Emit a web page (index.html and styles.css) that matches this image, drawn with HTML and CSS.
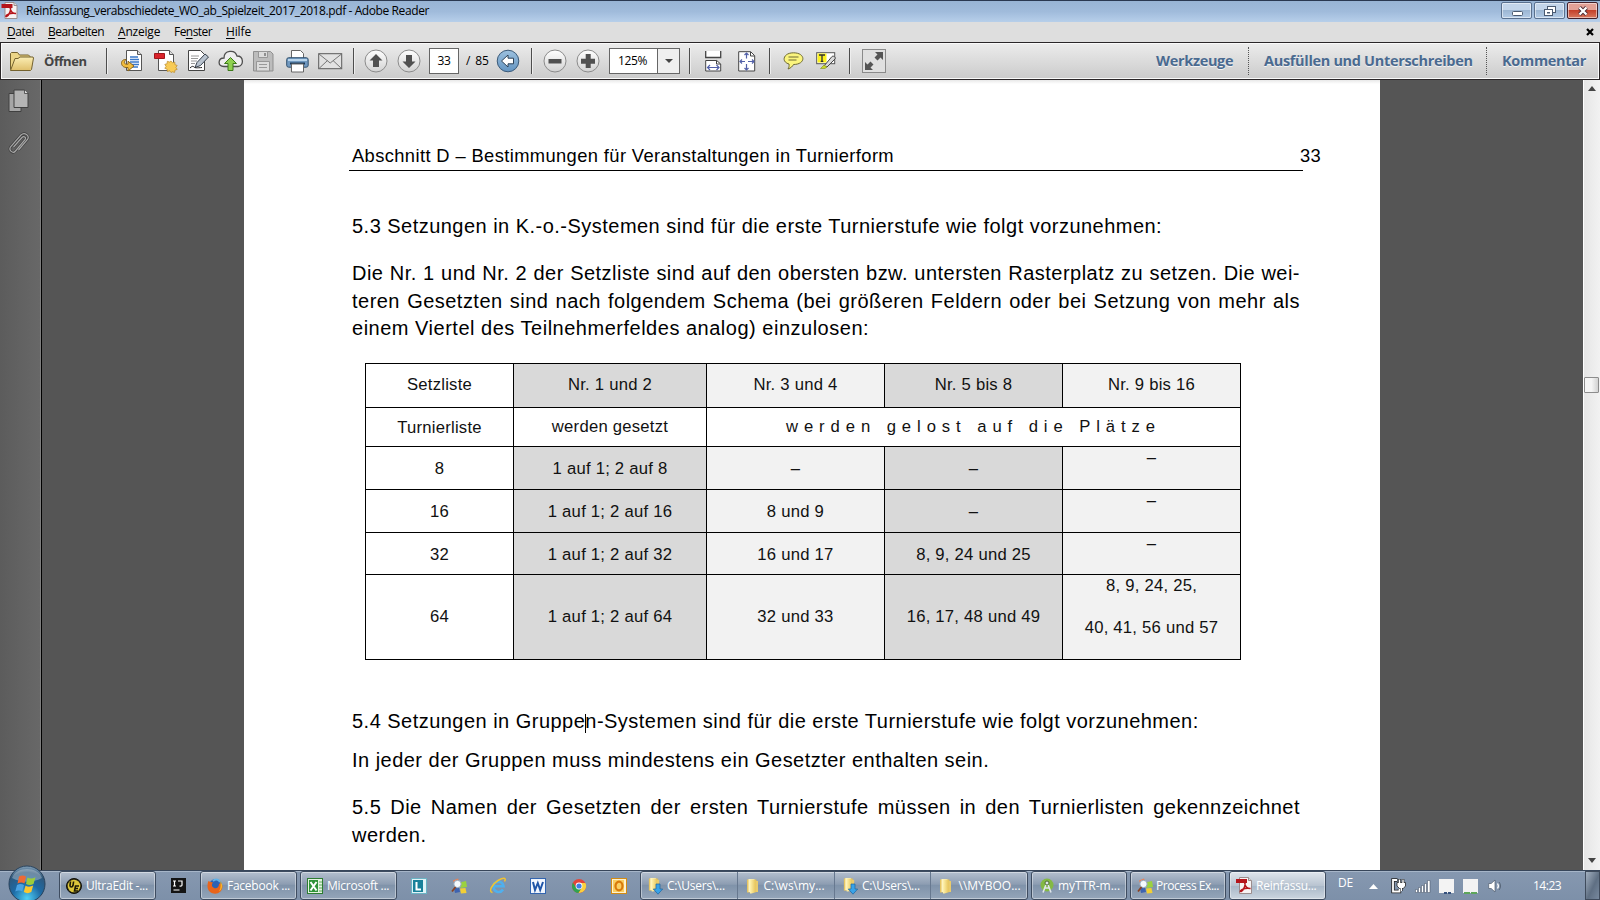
FILE: index.html
```html
<!DOCTYPE html>
<html lang="de">
<head>
<meta charset="utf-8">
<title>Reinfassung_verabschiedete_WO_ab_Spielzeit_2017_2018.pdf - Adobe Reader</title>
<link rel="stylesheet" href="styles.css">
</head>
<body>
<svg class="defs" width="0" height="0">
  <defs>
    <linearGradient id="gBtn" x1="0" y1="0" x2="0" y2="1"><stop offset="0" stop-color="#fff"/><stop offset="1" stop-color="#d2d2d2"/></linearGradient>
    <linearGradient id="gFolder" x1="0" y1="0" x2="0" y2="1"><stop offset="0" stop-color="#fbeeb4"/><stop offset="1" stop-color="#dfbf6b"/></linearGradient>
    <linearGradient id="gBlue" x1="0" y1="0" x2="0" y2="1"><stop offset="0" stop-color="#9cc0de"/><stop offset="1" stop-color="#6495c2"/></linearGradient>
    <linearGradient id="gYel" x1="0" y1="0" x2="1" y2="0"><stop offset="0" stop-color="#fff3b0"/><stop offset="1" stop-color="#e3bd4c"/></linearGradient>
    <radialGradient id="gOrb" cx=".5" cy=".9" r=".9"><stop offset="0" stop-color="#4fd0f5"/><stop offset=".45" stop-color="#1d6aa5"/><stop offset=".8" stop-color="#2f587c"/><stop offset="1" stop-color="#88a4bb"/></radialGradient>
    <symbol id="pdf" viewBox="0 0 16 17"><path d="M3.500 .5h9l3 3v13h-12z" fill="#f7f3f3" stroke="#9b8d8d"/><path d="M12.500 .5v3h3" fill="#ddd" stroke="#9b8d8d"/><path d="M0 2h11v4H0z" fill="#b5151b"/><path d="M4.500 15c3-2 5-5.500 4.500-9.500M4.500 15c-.8-2 4-4.500 10-3.500-3 .3-5.500-2-5.800-5.500" fill="none" stroke="#b5151b" stroke-width="1.500"/></symbol>
    <symbol id="fold" viewBox="0 0 16 16"><path d="M2 1.500h5.500v13H2z" fill="#e6c564"/><path d="M3.500 1h6v13h-6z" fill="#fdf3c0"/><path d="M5 1.500h6.500V14l-5 1.500H5z" fill="url(#gYel)"/><path d="M10.500 3H13v11h-2.500z" fill="#e9cb6c"/></symbol>
    <symbol id="folddl" viewBox="0 0 16 18"><use href="#fold" width="15" height="15"/><path d="M9 7h4v5h2.700L11 17.200 6.300 12H9z" fill="#39a3e8" stroke="#1d649f" stroke-width=".7"/></symbol>
    <symbol id="proc" viewBox="0 0 16 16"><path d="M2 2.500l5-2 2 5-5 2z" fill="#f08050"/><path d="M8.500 4.500l6.500-1.500 1 6-6.500 1z" fill="#9bd23f"/><path d="M3 10l5-1 1 5-5 1z" fill="#3d63b0"/><path d="M9 10.500l5.500-.5 1 5-5.500 .5z" fill="#f2cf35"/><circle cx="6.500" cy="6" r="3.700" fill="#f4f9fd" stroke="#93a4b8"/><path d="M4.500 9l-3.500 4.500" stroke="#8a4222" stroke-width="1.800"/></symbol>
  </defs>
</svg>

<header class="title">
  <svg class="title-icon" width="17" height="17"><use href="#pdf"/></svg>
  <span class="title-text">Reinfassung_verabschiedete_WO_ab_Spielzeit_2017_2018.pdf - Adobe Reader</span>
  <div class="winbtns">
    <span class="wb"><svg width="30" height="16"><rect x="10.500" y="8.500" width="10" height="4" rx="1" fill="#fff" stroke="#4b5a70"/></svg></span>
    <span class="wb"><svg width="30" height="16"><rect x="12.500" y="3.500" width="8" height="6" fill="#fff" stroke="#4b5a70"/><rect x="9.500" y="6.500" width="8" height="6" fill="#fff" stroke="#4b5a70"/><rect x="12" y="9" width="3" height="1.500" fill="#4b5a70"/></svg></span>
    <span class="wb close"><svg width="30" height="16"><path d="M11.500 4.500l7 7M18.500 4.500l-7 7" stroke="#4a2b33" stroke-width="4"/><path d="M11.500 4.500l7 7M18.500 4.500l-7 7" stroke="#fff" stroke-width="2.300"/></svg></span>
  </div>
</header>

<nav class="menu">
  <span class="m1"><u>D</u>atei</span><span class="m2"><u>B</u>earbeiten</span><span class="m3"><u>A</u>nzeige</span><span class="m4">Fe<u>n</u>ster</span><span class="m5"><u>H</u>ilfe</span>
  <svg class="menu-x" width="8" height="8"><path d="M1 1l6 6M7 1L1 7" stroke="#000" stroke-width="2.200"/></svg>
</nav>

<div class="toolbar">
  <svg class="i-folder" width="26" height="21" viewBox="0 0 26 21"><path d="M1.500 18.500v-16l1-1h6l2 2.500h9l1.500 1.500V18" fill="#ecd587" stroke="#74622f"/><path d="M1.500 19.500L6 7.500h3l2-1.500h13l.5 1-2 11.500-1 1z" fill="url(#gFolder)" stroke="#74622f"/></svg>
  <b class="open">Öffnen</b>
  <i class="sep s1"></i>
  <svg class="t1" width="24" height="22" viewBox="0 0 24 22"><path d="M6.500 .5h11l4 4v16h-15z" fill="#fff" stroke="#555"/><path d="M17.500 .5v4h4" fill="#ddd" stroke="#555"/><path d="M10 7h8M10 9.500h9M10 12h9M10 14.500h9M12 17h6" stroke="#3a78c9" stroke-width="1.300"/><path d="M6 9.500C0 9 0 17 6 17.500h2V21l6-5-6-4.800v3H6.500c-2.500-.2-3-2-.5-4.700z" fill="#f2bd3f" stroke="#8b651b"/></svg>
  <svg class="t2" width="24" height="23" viewBox="0 0 24 23"><path d="M4.500 .5h11l4 4v16h-15z" fill="#fff" stroke="#555"/><path d="M15.500 .5v4h4" fill="#ddd" stroke="#555"/><path d="M.5 3.500h10v5H.5z" fill="#d9232b" stroke="#a0161c"/><path d="M17 11l1.500 1.800 2.300-.7.1 2.500 2.300.9-1.300 1.900 1.300 2-2.300.8-.3 2.200-2.200-.6L17 22.500l-1.400-1.700-2.300.7-.2-2.400-2.300-.8 1.300-1.900-1.300-2 2.300-.7.2-2.400 2.300.7z" fill="#f8cb55" stroke="#b98a2c" stroke-width=".7"/></svg>
  <svg class="t3" width="23" height="22" viewBox="0 0 23 22"><path d="M1.500 .5h12l4 4v16h-16z" fill="#fff" stroke="#444"/><path d="M4 6h8M4 8.500h7M4 11h6M4 13.500h4" stroke="#999"/><path d="M8 17.500l2-5 8-8.500 3.500 3-8 8.500z" fill="#b9c3cf" stroke="#38424e"/><path d="M3 18c2-2 3-2 4-1s3 1 8 .5" fill="none" stroke="#222"/></svg>
  <svg class="t4" width="26" height="22" viewBox="0 0 26 22"><path d="M6 16.500C-1 16 0 8 6 8c0-8 11-9 13-2 7 0 7 10 1 10.500z" fill="#eee" stroke="#4e4e4e" stroke-width="1.300"/><path d="M12.500 7.500l6 6h-3.500v7h-5v-7H6.500z" fill="#8fd050" stroke="#3d7a1a"/></svg>
  <svg class="t5" width="21" height="21" viewBox="0 0 21 21"><path d="M.5 .5h17l2.500 2.500v17H.5z" fill="#bcbcbc" stroke="#8f8f8f"/><path d="M5.500 .5h9v6h-9zM3.500 10.500h13v9.500h-13z" fill="#dcdcdc" stroke="#979797"/><path d="M11 2h2v3h-2z" fill="#8f8f8f"/><path d="M6 13.500h8M6 16.500h8" stroke="#999"/></svg>
  <svg class="t6" width="23" height="23" viewBox="0 0 23 23"><path d="M5.500 8V.5h9l3 3V8" fill="#fff" stroke="#666"/><rect x=".7" y="7.700" width="21.500" height="9.500" rx="2" fill="#7199c0" stroke="#34536f"/><path d="M2 10h19" stroke="#b9d5ec" stroke-width="2"/><path d="M4 13.500h15" stroke="#1a3858" stroke-width="2"/><path d="M5.500 14h12v8h-12z" fill="#fff" stroke="#666"/></svg>
  <svg class="t7" width="25" height="17" viewBox="0 0 25 17"><rect x=".7" y=".7" width="23" height="15" fill="#e2e2e2" stroke="#5a5a5a"/><path d="M1 1l11.200 9L23.500 1M1 15.500l8.500-8M23.500 15.500l-8.500-8" fill="none" stroke="#777"/></svg>
  <i class="sep s2"></i>
  <svg class="c1" width="24" height="24" viewBox="0 0 24 24"><circle cx="12" cy="12" r="11" fill="url(#gBtn)" stroke="#8b8b8b"/><path d="M12 5l6.500 6.500H15V18H9v-6.500H5.500z" fill="#505050"/></svg>
  <svg class="c2" width="24" height="24" viewBox="0 0 24 24"><circle cx="12" cy="12" r="11" fill="url(#gBtn)" stroke="#8b8b8b"/><path d="M12 19l6.500-6.500H15V6H9v6.500H5.500z" fill="#505050"/></svg>
  <span class="pagebox">33</span>
  <span class="pages">/ 85</span>
  <svg class="c3" width="24" height="24" viewBox="0 0 24 24"><circle cx="12" cy="12" r="10.800" fill="url(#gBlue)" stroke="#3c5a78"/><path d="M5.500 12l6.500-6v3.200h5.500v5.600H12V18z" fill="#fff" stroke="#2d4258"/></svg>
  <i class="sep s3"></i>
  <svg class="c4" width="24" height="24" viewBox="0 0 24 24"><circle cx="12" cy="12" r="11" fill="url(#gBtn)" stroke="#8b8b8b"/><path d="M5.500 10h13v4.500h-13z" fill="#505050"/></svg>
  <svg class="c5" width="24" height="24" viewBox="0 0 24 24"><circle cx="12" cy="12" r="11" fill="url(#gBtn)" stroke="#8b8b8b"/><path d="M9.700 5h5v4.700H19v5h-4.300V19h-5v-4.300H5v-5h4.700z" fill="#505050"/></svg>
  <span class="zoombox"><span class="zval">125%</span><span class="zarr"><svg width="8" height="4"><path d="M0 0h8L4 4z" fill="#444"/></svg></span></span>
  <i class="sep s4"></i>
  <svg class="f1" width="17" height="21" viewBox="0 0 17 21"><path d="M.7 0v6.500h15V0" fill="#fff" stroke="#444" stroke-width="1.300"/><path d="M.7 20V9.500h11l4 3.500v7z" fill="#fff" stroke="#444"/><path d="M11.500 9.500V13h4" fill="none" stroke="#444"/><path d="M2.500 16.500h11.500M5 14l-2.500 2.500L5 19M11.500 14l2.500 2.500-2.500 2.500" fill="none" stroke="#5260a8" stroke-width="1.200"/></svg>
  <svg class="f2" width="18" height="21" viewBox="0 0 18 21"><path d="M.7 20V.7h12l4 4V20z" fill="#fff" stroke="#444"/><path d="M12.500 1v4h4" fill="none" stroke="#444"/><path d="M8.500 2v5.500M8.500 13v6M2 10.500h5M10 10.500h6M6.500 4l2-2 2 2M6.500 17l2 2 2-2M4 8.500l-2 2 2 2M14 8.500l2 2-2 2" fill="none" stroke="#5260a8" stroke-width="1.200"/></svg>
  <i class="sep s5"></i>
  <svg class="f3" width="21" height="18" viewBox="0 0 21 18"><path d="M10.500 .8c12.500 0 12.500 11.700 0 11.700-1 1.800-2.500 3.500-5.500 4.500 1-1.500 1.300-3 1-5C-2 10 0 .8 10.500 .8z" fill="#fbf57e" stroke="#6e6a35"/><path d="M5.500 5h10M5.500 8h8" stroke="#6e6a35"/></svg>
  <svg class="f4" width="21" height="18" viewBox="0 0 21 18"><rect x=".7" y=".7" width="18" height="11" fill="#fff" stroke="#555"/><path d="M1.500 1.500h9v9h-9z" fill="#fdf21d"/><path d="M3 3h6M6 3v6.500M4.700 9.300h2.600" stroke="#333" stroke-width="1.300"/><path d="M8 14l8-9.500c1.500-1 4 .5 3 2.500L11 15z" fill="#d9d9d9" stroke="#444"/><path d="M4.500 16.500L8 13l3 2-2 1.500z" fill="#c9d728" stroke="#7f8a20" stroke-width=".6"/></svg>
  <i class="sep s6"></i>
  <svg class="f5" width="24" height="24" viewBox="0 0 24 24"><rect x=".5" y=".5" width="23" height="23" fill="#e0e0e0" stroke="#8a8a8a"/><path d="M13 3h8v8l-2.500-2.500-3 3-3-3 3-3zM11 21H3v-8l2.500 2.500 3-3 3 3-3 3z" fill="#555"/></svg>
  <div class="tabs"><b class="tab tb1">Werkzeuge</b><b class="tab tb2">Ausfüllen und Unterschreiben</b><b class="tab tb3">Kommentar</b></div>
</div>

<main class="work">
  <aside class="side">
    <svg width="22" height="24" viewBox="0 0 22 24"><path d="M1 4.500h12v18H1z" fill="#a6a6a6" stroke="#404040"/><path d="M6 1h10.500L20 4.500V18.500H6z" fill="#b4b4b4" stroke="#404040"/><path d="M16.500 1v3.500H20" fill="#ddd" stroke="#404040" stroke-width=".8"/></svg>
    <svg class="clip" width="22" height="23" viewBox="0 0 22 23"><path d="M5.500 15L14 5.500c2-2 4.500 0 3 2.200L7.500 19c-2.500 3-7.500-.5-4.700-4.500L13 3c3.500-3.500 9 .5 6.500 4.500L10.500 18" fill="none" stroke="#3d3d3d" stroke-width="2.600"/><path d="M5.500 15L14 5.500c2-2 4.500 0 3 2.200L7.500 19c-2.500 3-7.500-.5-4.700-4.500L13 3c3.500-3.500 9 .5 6.500 4.500L10.500 18" fill="none" stroke="#a8a8a8" stroke-width="1.200"/></svg>
  </aside>
  <div class="canvas">
    <article class="page">
      <div class="head"><span class="head-text">Abschnitt D – Bestimmungen für Veranstaltungen in Turnierform</span><span class="head-no">33</span></div>
      <div class="rule"></div>
      <p class="p53">5.3 Setzungen in K.-o.-Systemen sind für die erste Turnierstufe wie folgt vorzunehmen:</p>
      <div class="para">
        <p class="just">Die Nr. 1 und Nr. 2 der Setzliste sind auf den obersten bzw. untersten Rasterplatz zu setzen. Die wei-</p>
        <p class="just">teren Gesetzten sind nach folgendem Schema (bei größeren Feldern oder bei Setzung von mehr als</p>
        <p class="last">einem Viertel des Teilnehmerfeldes analog) einzulosen:</p>
      </div>
      <div class="table">
        <div class="c r1">Setzliste</div><div class="c r1 dk">Nr. 1 und 2</div><div class="c r1 lt">Nr. 3 und 4</div><div class="c r1 dk">Nr. 5 bis 8</div><div class="c r1 lt">Nr. 9 bis 16</div>
        <div class="c r2 low">Turnierliste</div><div class="c r2">werden gesetzt</div><div class="c r2 wide">werden gelost auf die Plätze</div>
        <div class="c">8</div><div class="c dk">1 auf 1; 2 auf 8</div><div class="c lt">–</div><div class="c dk">–</div><div class="c lt top">–</div>
        <div class="c">16</div><div class="c dk">1 auf 1; 2 auf 16</div><div class="c lt">8 und 9</div><div class="c dk">–</div><div class="c lt top">–</div>
        <div class="c">32</div><div class="c dk">1 auf 1; 2 auf 32</div><div class="c lt">16 und 17</div><div class="c dk">8, 9, 24 und 25</div><div class="c lt top">–</div>
        <div class="c r6">64</div><div class="c dk r6">1 auf 1; 2 auf 64</div><div class="c lt r6">32 und 33</div><div class="c dk r6">16, 17, 48 und 49</div><div class="c lt top"><div>8, 9, 24, 25,</div><div class="second">40, 41, 56 und 57</div></div>
      </div>
      <p class="p54">5.4 Setzungen in Gruppe<span class="caret"></span>n-Systemen sind für die erste Turnierstufe wie folgt vorzunehmen:</p>
      <p class="pin">In jeder der Gruppen muss mindestens ein Gesetzter enthalten sein.</p>
      <p class="p55 just">5.5 Die Namen der Gesetzten der ersten Turnierstufe müssen in den Turnierlisten gekennzeichnet</p>
      <p>werden.</p>
    </article>
  </div>
  <div class="scroll">
    <svg width="8" height="5"><path d="M0 5h8L4 0z" fill="#444"/></svg>
    <span class="thumb"></span>
    <svg class="down" width="8" height="5"><path d="M0 0h8L4 5z" fill="#444"/></svg>
  </div>
</main>

<footer class="taskbar">
  <svg class="orb" width="38" height="36" viewBox="0 0 38 36"><circle cx="19" cy="19" r="18" fill="url(#gOrb)" stroke="#28425c"/><path d="M4 13C8 1 30 1 34 13 24 18 14 18 4 13z" fill="#fff" opacity=".3"/><path d="M11 11.500c2.500-1.500 5-1.300 7 0l-1.500 7c-2.500-1.300-4.500-1.300-7 0z" fill="#ee6a35"/><path d="M19.500 12.500c2.500 1.300 5 1.300 8-.3L25.500 19c-2.500 1.300-5 1.300-7.500 0z" fill="#9ccc3c"/><path d="M9 20c2.500-1.300 4.800-1.200 7 0l-1.700 6.500c-2.300-1.300-4.500-1.300-7 0z" fill="#4ba3e3"/><path d="M17.500 20.800c2.500 1.300 4.800 1.300 7.700-.2L23.300 27c-2.500 1.500-5 1.500-7.500 0z" fill="#fcc72e"/></svg>
  <div class="tb b1"><svg width="16" height="16" viewBox="0 0 16 16"><circle cx="8" cy="8" r="7.500" fill="#2d2a13" stroke="#11100a"/><circle cx="8" cy="8" r="6.300" fill="#dcc63a"/><path d="M4.500 3.500L4 7.500c0 2 2.500 2 3 0l.6-4M13 8H9.500L8.500 13H12M9 10.500h3" fill="none" stroke="#1d1a06" stroke-width="1.600"/></svg><span>UltraEdit -...</span></div>
  <svg class="k-ij" width="15" height="15"><rect width="15" height="15" fill="#141414"/><path d="M2 3h3M3.500 3v5M2 8h3M7 3h4v4c0 1-1 1.300-2.500 1M2.500 12h6" fill="none" stroke="#fff" stroke-width="1.200"/></svg>
  <div class="tb b2"><svg width="16" height="16" viewBox="0 0 16 16"><circle cx="8.500" cy="7.500" r="6.500" fill="#2d62b3"/><path d="M6 3c3-3 6-1 7 1" stroke="#5fb3ea" stroke-width="2" fill="none"/><path d="M1.500 3c1 1 3 1 4.500 1.500C4 7 5 9 7 10c3 1 5-1 5-4 2-1 3 0 3.500 2 0 10-14 10-15 1 0-2 0-4 1-6z" fill="#e8641b"/><path d="M13 3c3 3 3 8-1 10.500C14 10 14 6 13 3z" fill="#f6b824"/></svg><span>Facebook ...</span></div>
  <div class="tb b3"><svg width="16" height="16" viewBox="0 0 16 16"><rect x=".5" y=".5" width="15" height="15" fill="#e5f3e1" stroke="#2d7d32"/><path d="M2 2h9v12H2z" fill="#2f9338"/><path d="M3.500 4l6 8.500M9.500 4l-6 8.500" stroke="#fff" stroke-width="2"/><path d="M12 4h3M12 7h3M12 10h3M12 13h3" stroke="#5aa85a"/></svg><span>Microsoft ...</span></div>
  <svg class="k-l" width="16" height="16"><rect x=".5" y=".5" width="15" height="15" fill="#e0f3f7" stroke="#6ab3c4"/><rect x="2" y="2" width="10" height="12" fill="#18819a"/><path d="M5.500 4v7.500H10" fill="none" stroke="#fff" stroke-width="2"/></svg>
  <svg class="k-p" width="16" height="16"><use href="#proc"/></svg>
  <svg class="k-e" width="18" height="17" viewBox="0 0 18 17"><path d="M14 12.500C11 17 4 15 4.500 9 5 3.500 13.500 3 14.500 9.300H5" fill="none" stroke="#4fb0ee" stroke-width="2.600"/><path d="M3.500 15.500C-1 15 3 7 9 3.500c5-3 9-3.500 6.500 1" fill="none" stroke="#f0c331" stroke-width="1.500"/></svg>
  <svg class="k-w" width="16" height="16"><rect x=".5" y=".5" width="15" height="15" fill="#eef4fc" stroke="#3365b0"/><path d="M2 2h12v11H2z" fill="#f4f8ff"/><path d="M3 4l2 8 2.800-7 2.400 7L13 4" fill="none" stroke="#1f55a8" stroke-width="2"/></svg>
  <svg class="k-c" width="16" height="16" viewBox="0 0 16 16"><circle cx="8" cy="8" r="7" fill="#e2453a"/><path d="M1.900 4.500A7 7 0 0 0 7.500 15L11 9.500 8 8 5 9.500z" fill="#31a350"/><path d="M14.400 5A7 7 0 0 1 7.500 15L11 9.500 10 5z" fill="#fbd13d"/><circle cx="8" cy="8" r="3.400" fill="#fff"/><circle cx="8" cy="8" r="2.600" fill="#3f7ee8"/></svg>
  <svg class="k-o" width="16" height="16"><rect x=".5" y=".5" width="15" height="15" fill="#fdf2d0" stroke="#d38b14"/><rect x="2" y="2" width="11" height="12" fill="#f9cf63"/><ellipse cx="8" cy="8" rx="3.500" ry="4.300" fill="none" stroke="#d97a0b" stroke-width="2.200"/></svg>
  <div class="group">
    <div class="g"><svg width="16" height="18"><use href="#folddl"/></svg><span>C:\Users\...</span></div>
    <div class="g"><svg width="16" height="16"><use href="#fold"/></svg><span class="ws">C:\ws\my...</span></div>
    <div class="g"><svg width="16" height="18"><use href="#folddl"/></svg><span>C:\Users\...</span></div>
    <div class="g"><svg width="16" height="16"><use href="#fold"/></svg><span class="loose">\\MYBOO...</span></div>
  </div>
  <div class="tb b4"><svg width="16" height="16" viewBox="0 0 16 16"><circle cx="8" cy="7" r="6.500" fill="#83b944"/><path d="M8 4L4 14.500M8 4l4 10.500M5.500 10h5" stroke="#dfe6ea" stroke-width="1.600"/><circle cx="8" cy="5" r="2" fill="#dfe6ea" stroke="#4f6d33"/></svg><span class="loose">myTTR-m...</span></div>
  <div class="tb b5"><svg width="16" height="16"><use href="#proc"/></svg><span class="pe">Process Ex...</span></div>
  <div class="tb b6 active"><svg width="16" height="17"><use href="#pdf"/></svg><span>Reinfassu...</span></div>
  <span class="lang">DE</span>
  <svg class="y1" width="9" height="5"><path d="M0 5h9L4.500 0z" fill="#fff"/></svg>
  <svg class="y2" width="15" height="16" viewBox="0 0 15 16"><path d="M6.500 2H2v11.500h6.500V11" fill="none" stroke="#222" stroke-width="3.400"/><path d="M6 2H2v11.500h6.500V11" fill="none" stroke="#fff" stroke-width="1.800"/><path d="M8.500 1v4M12 1v4M10.300 10v3" stroke="#222" stroke-width="2.600"/><path d="M6 4.500h8.500V8l-2.200 2.500H8.500L6 8z" fill="#fff" stroke="#222" stroke-width=".8"/><path d="M8.500 1.500v4M12 1.500v4M10.300 10v3" stroke="#fff" stroke-width="1.400"/></svg>
  <svg class="y3" width="16" height="13"><path d="M.5 9.500h2v3h-2zM3.500 7.500h2v5h-2zM6.500 5.500h2v7h-2zM9.500 3.500h2v9h-2zM12.500 .5h2.500v12h-2.500z" fill="#fff" stroke="#3f4b5e" stroke-width=".5"/></svg>
  <svg class="y4" width="15" height="15"><rect width="15" height="14" fill="#f3f3f3"/><path d="M5 14h3M9 14h3" stroke="#35507c" stroke-width="2"/></svg>
  <svg class="y5" width="15" height="15"><rect width="15" height="14" fill="#f3f3f3"/><path d="M1 14h6M8 14h6" stroke="#5da55a" stroke-width="2"/></svg>
  <svg class="y6" width="14" height="14" viewBox="0 0 14 14"><path d="M.7 4.500h2.500L7 1v12L3.200 9.500H.7z" fill="#fff" stroke="#4c5a6c" stroke-width=".7"/><path d="M9.500 4.500c1 1.500 1 3.500 0 5" fill="none" stroke="#fff" stroke-width="1.300"/><path d="M11 3c2 2.500 2 5.500 0 8" fill="none" stroke="#4c5a6c" stroke-width=".8"/></svg>
  <span class="clock">14:23</span>
  <i class="desk"></i>
</footer>
</body>
</html>
```
FILE: styles.css
```css
* { box-sizing: border-box; }
html, body { margin: 0; }
body {
  width: 1600px; height: 900px; overflow: hidden;
  display: flex; flex-direction: column;
  font: 12px/16px "Open Sans", "Noto Sans", sans-serif; color: #000;
  background: #555;
}
svg { display: block; flex: none; }
.defs { position: absolute; }
p { margin: 0; }

/* Window title */
.title {
  flex: none; height: 22px; display: flex; align-items: flex-start;
  border-top: 1px solid #2a3850;
  background: linear-gradient(#98b4d4, #a0bbdb 50%, #b7cfea);
}
.title-icon { margin: 1px 0 0 1px; }
.title-text { margin: 2px 0 0 8px; letter-spacing: -.403px; white-space: nowrap; }
.winbtns { margin: 1px 2px 0 auto; display: flex; gap: 2px; }
.wb {
  width: 31px; height: 17px; border: 1px solid #5a708e; border-radius: 2px;
  box-shadow: inset 0 0 0 1px rgba(255,255,255,.5);
  background: linear-gradient(#c3d5ea 45%, #9cb6d3 50%, #b3cbe6);
}
.wb.close { border-color: #43202a; background: linear-gradient(#e2a196 45%, #c4412b 50%, #d8785f); }

/* Menu */
.menu { flex: none; height: 20px; display: flex; background: #dedede; padding: 2px 0 0 7px; }
.menu u { text-underline-offset: 2px; }
.menu span { white-space: nowrap; }
.m1 { width: 41px; letter-spacing: -.45px; }
.m2 { width: 70px; letter-spacing: -.56px; }
.m3 { width: 56px; letter-spacing: -.2px; }
.m4 { width: 52px; letter-spacing: -.56px; }
.m5 { letter-spacing: -.13px; }
.menu-x { margin: 4px 6px 0 auto; }

/* Toolbar */
.toolbar {
  flex: none; height: 38px; display: flex; align-items: center;
  border: 1px solid #2a2628; box-shadow: inset 0 0 0 1px #fafafa;
  background: linear-gradient(#ececec, #cbcbcb);
}
.i-folder { margin-left: 8px; }
.open { width: 50px; margin-left: 9px; font-size: 13px; letter-spacing: -.45px; color: #444; }
.sep { flex: none; width: 2px; height: 26px; background: #4d4d4d; border-right: 1px solid #eee; }
.s1 { margin-left: 12px; }
.t1 { margin-left: 12px; }
.t2 { margin-left: 10px; }
.t3 { margin-left: 9px; }
.t4 { margin-left: 8px; }
.t5 { margin-left: 9px; }
.t6 { margin-left: 12px; }
.t7 { margin-left: 9px; }
.s2 { margin-left: 10px; }
.c1 { margin-left: 9px; }
.c2 { margin-left: 9px; }
.pagebox {
  width: 30px; height: 26px; margin-left: 8px; text-align: center; line-height: 23px;
  background: #fff; border: 1px solid #666; letter-spacing: -.3px;
}
.pages { width: 24px; margin-left: 7px; white-space: pre; letter-spacing: -.1px; word-spacing: 2px; }
.c3 { margin-left: 6px; }
.s3 { margin-left: 11px; }
.c4 { margin-left: 10px; }
.c5 { margin-left: 9px; }
.zoombox { display: flex; width: 71px; height: 26px; margin-left: 9px; border: 1px solid #666; line-height: 23px; background: #fff; }
.zval { width: 48px; padding-left: 8px; border-right: 1px solid #666; letter-spacing: -.35px; }
.zarr { flex: 1; display: grid; place-items: center; background: #efefef; }
.s4 { margin-left: 9px; }
.f1 { margin-left: 14px; }
.f2 { margin-left: 16px; }
.s5 { margin-left: 13px; }
.f3 { margin-left: 12px; }
.f4 { margin-left: 12px; }
.s6 { margin-left: 12px; }
.f5 { margin-left: 11px; }
.tabs { display: flex; margin-left: auto; margin-right: 14px; }
.tab { height: 28px; line-height: 27px; font-size: 14.5px; letter-spacing: -.32px; color: #4a6a90; white-space: nowrap; text-shadow: 0 1px 0 #f4f4f4; }
.tb1 { width: 92px; }
.tb2 { width: 238px; padding-left: 15px; border-left: 1px dotted #555; }
.tb3 { width: 99px; padding-left: 15px; border-left: 1px dotted #555; }

/* Work area */
.work { flex: none; height: 790px; display: flex; background: #555; }
.side { width: 42px; padding: 9px 0 0 8px; border-right: 1px solid #000; background: linear-gradient(90deg, #5c5c5c, #686868); box-shadow: inset -1px 0 0 #7d7d7d; }
.clip { margin-top: 19px; }
.canvas { flex: 1; padding-left: 202px; }
.page {
  width: 1136px; height: 790px; overflow: hidden; padding: 62px 0 0 108px;
  background: linear-gradient(#e8e8e8, #fff 4px);
  font: 20px/28px "Liberation Sans", Arial, sans-serif; letter-spacing: .475px; white-space: nowrap;
}
.head { display: flex; justify-content: space-between; width: 969px; font-size: 18.33px; letter-spacing: .385px; }
.head-no { letter-spacing: .3px; }
.rule { width: 954px; height: 1px; margin: 0 0 0 -3px; background: #000; }
.p53 { margin-top: 41px; }
.para { margin-top: 20px; line-height: 27.500px; }
.last { letter-spacing: .51px; }
.just { width: 948px; text-align: justify; text-align-last: justify; white-space: normal; }
.table {
  display: grid; width: 876px; margin: 20px 0 0 13px; padding: 1px; gap: 1px; background: #000;
  grid-template-columns: 147px 192px 177px 177px 177px;
  grid-template-rows: 43px 38px 42px 42px 41px 84px;
  font-size: 16.67px; line-height: 20px; letter-spacing: .24px; text-align: center; color: #111;
}
.c { background: #fff; padding-top: 12px; }
.c.dk { background: #d9d9d9; }
.c.lt { background: #f2f2f2; }
.c.r1 { padding-top: 11px; }
.c.r2 { padding-top: 9px; }
.c.low { padding-top: 10px; }
.c.r6 { padding-top: 32px; }
.c.top { padding-top: 1px; }
.wide { grid-column: span 3; letter-spacing: 5.920px; }
.second { margin-top: 22px; }
.p54 { margin-top: 47px; }
.caret { display: inline-block; width: 1px; height: 19px; margin-right: -1px; vertical-align: -5px; background: #000; }
.pin { margin-top: 11px; }
.p55 { margin-top: 19px; }
.scroll {
  width: 17px; display: flex; flex-direction: column; align-items: center; padding: 6px 1px 7px 0;
  border-left: 1px solid #fff; background: linear-gradient(90deg, #e6e6e6, #f2f2f2);
}
.thumb { width: 15px; height: 16px; margin-top: 286px; border: 1px solid #8c8c8c; border-radius: 1px; background: linear-gradient(90deg, #f5f5f5 50%, #d2d2d2); }
.down { margin-top: auto; }

/* Taskbar */
.taskbar {
  flex: none; height: 30px; display: flex; align-items: center; position: relative;
  background: linear-gradient(#8698b0, #7d90a9); border-top: 1px solid #38465a; box-shadow: inset 0 1px 0 #a6b5c8; color: #fff;
}
.orb { position: absolute; left: 8px; top: -6px; }
.tb, .group {
  flex: none; height: 29px; border: 1px solid #3e4c60; border-radius: 3px;
  background: linear-gradient(#b4bfce, #8d9db2 45%, #8093aa 50%, #94a5b9); box-shadow: inset 0 0 0 1px rgba(255,255,255,.4);
}
.tb { width: 97px; display: flex; align-items: center; gap: 4px; padding-left: 6px; letter-spacing: -.25px; white-space: nowrap; }
.b1 { margin-left: 59px; }
.k-ij { margin-left: 15px; }
.b2 { margin-left: 14px; }
.b3 { margin-left: 3px; }
.k-l { margin-left: 14px; }
.k-p { margin-left: 24px; }
.k-e { margin-left: 22px; }
.k-w { margin-left: 23px; }
.k-c { margin-left: 25px; }
.k-o { margin-left: 24px; }
.group { width: 388px; margin-left: 13px; display: flex; letter-spacing: -.25px; white-space: nowrap; }
.g { width: 97px; display: flex; align-items: center; gap: 4px; padding-left: 6px; }
.g + .g { border-left: 1px solid #67788f; padding-left: 7px; }
.loose { letter-spacing: 0; }
.ws { letter-spacing: 0; margin-left: -2px; }
.b4 { margin-left: 3px; width: 96px; gap: 3px; padding-left: 7px; }
.b5 { margin-left: 3px; width: 96px; gap: 3px; }
.pe { letter-spacing: -.445px; }
.b6 { margin-left: 3px; gap: 4px; }
.b6.active { background: linear-gradient(#dfe5ec, #b9c4d1 50%, #a9b8c8 52%, #cbd5df); }
.lang { margin: -6px 0 0 12px; width: 17px; letter-spacing: -.3px; }
.y1 { margin: 2px 0 0 14px; }
.y2 { margin-left: 13px; }
.y3 { margin: 2px 0 0 9px; }
.y4 { margin: 2px 0 0 8px; }
.y5 { margin: 2px 0 0 9px; }
.y6 { margin-left: 10px; }
.clock { margin-left: 31px; letter-spacing: -.5px; }
.desk { align-self: stretch; width: 15px; margin-left: auto; border: 1px solid #3f4b5c; background: linear-gradient(115deg, #a3b0c0, #5f6f83 55%, #78899e); }
```
